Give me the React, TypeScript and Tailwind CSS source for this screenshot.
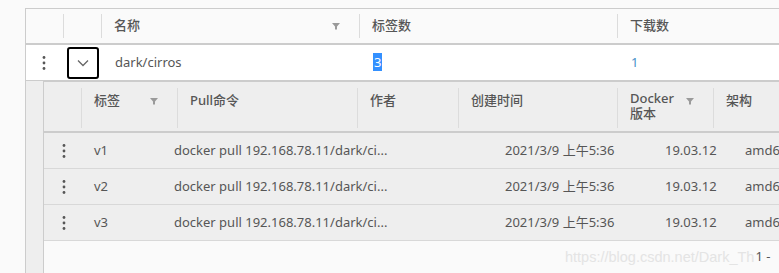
import * as React from "react";

const font = { fontFamily: '"Noto Sans", "Noto Sans CJK SC", sans-serif' };

function Dots() {
  return (
    <svg width="4" height="16" viewBox="0 0 4 16" className="text-[#565656]">
      <circle cx="2" cy="2.5" r="1.4" fill="currentColor" />
      <circle cx="2" cy="8" r="1.4" fill="currentColor" />
      <circle cx="2" cy="13.5" r="1.4" fill="currentColor" />
    </svg>
  );
}

function Filter() {
  return (
    <svg width="8" height="8" viewBox="0 0 8 8" className="text-[#9a9a9a]">
      <path d="M0 1h8L5 4.5V7.5H3V4.5Z" fill="currentColor" />
    </svg>
  );
}

function Sep({ h = "h-[24px]" }: { h?: string }) {
  return <div className={`w-px ${h} bg-[#dcdcdc] shrink-0`} />;
}

const tags = ["v1", "v2", "v3"];

export default function App() {
  return (
    <div
      className="w-[779px] h-[273px] overflow-hidden bg-[#fafafa] text-[13px] text-[#565656]"
      style={font}
    >
      <div className="ml-[25px] mt-[8px] w-[800px] border-l border-t border-[#cccccc]">
        {/* outer header */}
        <div className="flex items-center h-[36px] bg-[#fafafa] border-b-2 border-[#cccccc] font-medium">
          <div className="w-[37px]" />
          <Sep />
          <div className="w-[37px]" />
          <Sep />
          <div className="w-[257px] flex items-center justify-between pl-[12px] pr-[19px]">
            <span>名称</span>
            <Filter />
          </div>
          <Sep />
          <div className="w-[257px] pl-[12px]">标签数</div>
          <Sep />
          <div className="flex-1 pl-[12px]">下载数</div>
        </div>

        {/* outer row */}
        <div className="flex items-center h-[36px] bg-white border-b border-[#cccccc]">
          <div className="w-[38px] flex justify-center pr-[2px]">
            <Dots />
          </div>
          <div className="w-[38px] flex justify-center">
            <button className="w-[32px] h-[32px] border-2 border-black rounded-[3px] flex items-center justify-center bg-white">
              <svg width="12" height="8" viewBox="0 0 12 8" fill="none">
                <path d="M1 1.5l5 5 5-5" stroke="#666" strokeWidth="1.3" />
              </svg>
            </button>
          </div>
          <div className="w-[258px] pl-[13px]">dark/cirros</div>
          <div className="w-[258px] pl-[13px]">
            <span className="bg-[#3390ff] text-white px-[1px]">3</span>
          </div>
          <div className="flex-1 pl-[13px] text-[#4a8fc8]">1</div>
        </div>

        {/* nested area */}
        <div className="flex h-[200px]">
          <div className="w-[17px] bg-[#eeeeee]" />
          <div className="flex-1 border-l border-t border-[#cccccc] flex flex-col">
            <div className="bg-[#eeeeee]">
              {/* nested header */}
              <div className="flex h-[51px] border-b-2 border-[#cccccc] font-medium pt-[6px]">
                <div className="w-[37px]" />
                <Sep h="h-[40px]" />
                <div className="w-[95px] flex items-start justify-between pl-[12px] pr-[19px] pt-[3px]">
                  <span>标签</span>
                  <span className="pt-[6px]"><Filter /></span>
                </div>
                <Sep h="h-[40px]" />
                <div className="w-[179px] pl-[12px] pt-[3px]">Pull命令</div>
                <Sep h="h-[40px]" />
                <div className="w-[100px] pl-[12px] pt-[3px]">作者</div>
                <Sep h="h-[40px]" />
                <div className="w-[158px] pl-[12px] pt-[3px]">创建时间</div>
                <Sep h="h-[40px]" />
                <div className="w-[95px] flex items-start justify-between pl-[12px] pr-[19px] pt-[3px]">
                  <div className="leading-[15px]">
                    <div>Docker</div>
                    <div>版本</div>
                  </div>
                  <span className="pt-[6px]"><Filter /></span>
                </div>
                <Sep h="h-[40px]" />
                <div className="flex-1 pl-[12px] pt-[3px]">架构</div>
              </div>

              {/* nested rows */}
              {tags.map((t) => (
                <div key={t} className="flex items-center h-[36px] border-b border-[#d8d8d8]">
                  <div className="w-[37px] flex justify-center pl-[3px]">
                    <Dots />
                  </div>
                  <div className="w-[93px] pl-[13px]">{t}</div>
                  <div className="w-[331px] whitespace-nowrap">docker pull 192.168.78.11/dark/ci...</div>
                  <div className="w-[160px] whitespace-nowrap">2021/3/9 上午5:36</div>
                  <div className="w-[80px]">19.03.12</div>
                  <div className="flex-1 whitespace-nowrap">amd64</div>
                </div>
              ))}
            </div>

            {/* footer */}
            <div className="flex-1 bg-[#fafafa] flex items-start pt-[6px] pl-[521px] whitespace-nowrap">
              <span
                className="text-[#e4e4e4] text-[14.5px]"
                style={{ fontFamily: '"Liberation Sans", sans-serif' }}
              >
                https://blog.csdn.net/Dark_Th
              </span>
              <span className="ml-[1px]">1 -</span>
            </div>
          </div>
        </div>
      </div>
    </div>
  );
}
